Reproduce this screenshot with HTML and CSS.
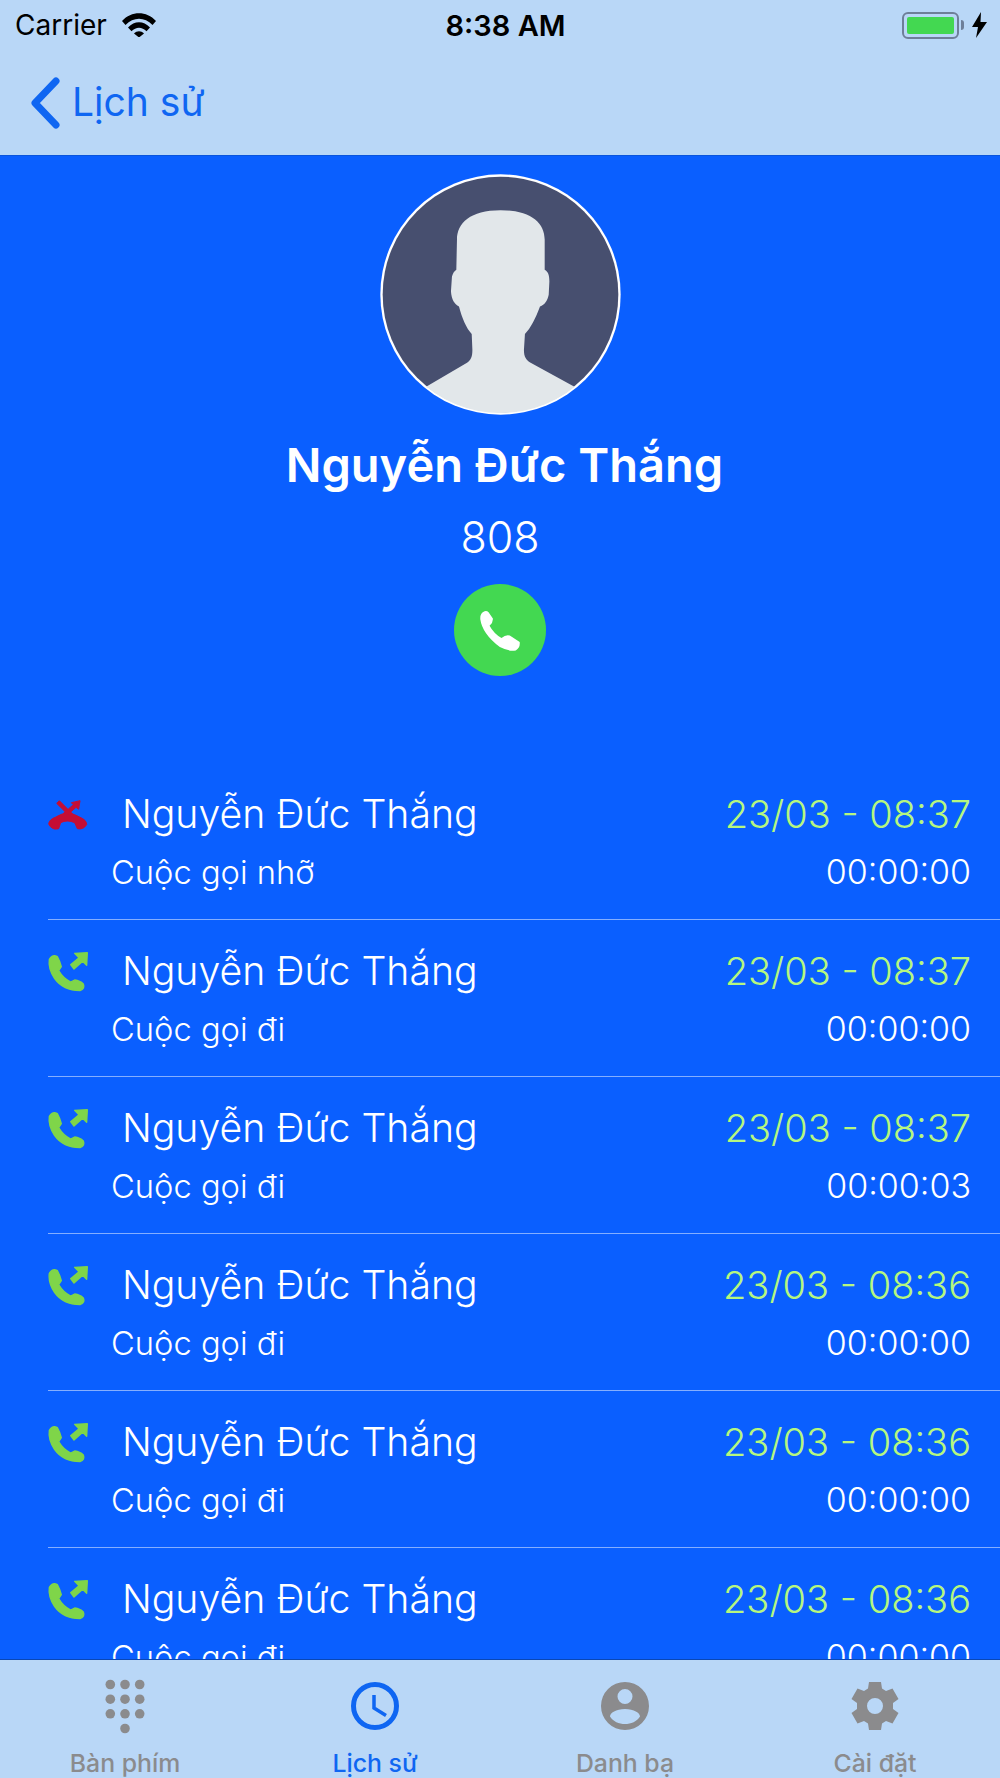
FILE: index.html
```html
<!DOCTYPE html>
<html lang="vi">
<head>
<meta charset="utf-8">
<title>Lịch sử</title>
<link rel="stylesheet" href="styles.css">
</head>
<body>
<svg class="defs" width="0" height="0" aria-hidden="true">
  <defs>
    <filter id="soft" x="-10%" y="-10%" width="120%" height="120%"><feGaussianBlur stdDeviation="1.6"/></filter>
    <filter id="softer" x="-10%" y="-10%" width="120%" height="120%"><feGaussianBlur stdDeviation="2"/></filter>
    <clipPath id="avatar-clip"><circle cx="420" cy="404" r="354"/></clipPath>
    <symbol id="out-icon" viewBox="54 54 120 126">
      <g filter="url(#softer)" fill="#7fd54a" stroke="#7fd54a" stroke-width="4" stroke-linejoin="round">
        <path d="M58 82Q68 66 82 74Q90 88 94 104L86 116Q100 140 122 150L134 144Q150 146 160 156Q166 170 150 176Q100 176 74 140Q54 110 58 82Z"/>
        <path d="M134 64L172 62L170 100L158 88L132 111L122 98L147 77Z"/>
      </g>
    </symbol>
    <symbol id="miss-icon" viewBox="54 63 120 126">
      <g filter="url(#softer)" fill="#c50f35" stroke="#c50f35" stroke-width="3" stroke-linejoin="round">
        <path d="M56 156Q58 142 76 136Q112 112 150 136Q170 144 170 158Q160 174 142 170L134 152Q112 142 92 152L86 170Q66 176 56 156Z"/>
        <path d="M80 94L88 86L134 132L126 140Z"/>
        <path d="M124 92L150 86L146 112L138 106L104 136L96 128L130 98Z"/>
      </g>
    </symbol>
  </defs>
</svg>

<div class="app">
  <header class="topbar">
    <div class="status">
      <div class="status-left">
        <span class="carrier">Carrier</span>
        <svg class="wifi" viewBox="0 0 34 24"><path d="M0 8.500C9.500-1.800 24.500-1.800 34 8.500L30.500 12.500C22.500 4.300 11.500 4.300 3.500 12.500Z"/><path d="M6 15C12.500 8 21.500 8 28 15L24.500 18.800C20 14 14 14 9.500 18.800Z"/><path d="M12 21C15 18 19 18 22 21L17 25Z"/></svg>
      </div>
      <span class="clock">8:38 AM</span>
      <div class="status-right">
        <span class="battery"><span class="battery-fill"></span></span>
        <span class="battery-cap"></span>
        <svg class="bolt" viewBox="0 0 15 26"><path d="M9 0L0 15H6L4 26L15 10H8.500Z"/></svg>
      </div>
    </div>
    <div class="nav">
      <svg class="chevron" viewBox="0 0 32 52"><path d="M26 4L5 26L26 48" fill="none" stroke="currentColor" stroke-width="7" stroke-linecap="round" stroke-linejoin="round"/></svg>
      <span class="nav-title">Lịch sử</span>
    </div>
  </header>

  <main class="content">
    <section class="hero">
      <svg class="avatar" viewBox="60 44 720 720">
        <circle cx="420" cy="404" r="359" fill="#fff"/>
        <circle cx="420" cy="404" r="352" fill="#474f6f"/>
        <g clip-path="url(#avatar-clip)">
          <path filter="url(#soft)" fill="#e2e7ea" d="M290 240C290 190 330 152 420 152C510 152 552 190 552 240L552 330C562 336 566 345 566 365L564 405C560 425 552 434 538 440C525 475 510 505 493 522L490 570C490 590 496 600 510 608L660 690L660 790L180 790L180 690L320 608C332 600 336 590 336 570L334 522C318 505 305 475 296 440C282 432 274 420 272 395L275 350C278 340 282 334 288 330Z"/>
        </g>
      </svg>
      <h1 class="hero-name">Nguyễn Đức Thắng</h1>
      <p class="hero-number">808</p>
      <button class="call-button" type="button" aria-label="Gọi">
        <svg class="call-glyph" viewBox="640 550 160 160"><path fill="#fff" d="M672 572Q658 576 659 596Q665 640 718 680Q745 694 766 690Q780 682 778 665L748 645Q736 641 723 653Q700 640 687 616Q698 606 697 594L684 575Q679 570 672 572Z"/></svg>
      </button>
    </section>

    <section class="calls">
      <article class="call">
        <div class="call-line">
          <svg class="call-icon"><use href="#miss-icon"/></svg>
          <span class="call-name">Nguyễn Đức Thắng</span>
          <span class="call-date">23/03 - 08:37</span>
        </div>
        <div class="call-line call-meta"><span>Cuộc gọi nhỡ</span><span>00:00:00</span></div>
      </article>
      <article class="call">
        <div class="call-line">
          <svg class="call-icon"><use href="#out-icon"/></svg>
          <span class="call-name">Nguyễn Đức Thắng</span>
          <span class="call-date">23/03 - 08:37</span>
        </div>
        <div class="call-line call-meta"><span>Cuộc gọi đi</span><span>00:00:00</span></div>
      </article>
      <article class="call">
        <div class="call-line">
          <svg class="call-icon"><use href="#out-icon"/></svg>
          <span class="call-name">Nguyễn Đức Thắng</span>
          <span class="call-date">23/03 - 08:37</span>
        </div>
        <div class="call-line call-meta"><span>Cuộc gọi đi</span><span>00:00:03</span></div>
      </article>
      <article class="call">
        <div class="call-line">
          <svg class="call-icon"><use href="#out-icon"/></svg>
          <span class="call-name">Nguyễn Đức Thắng</span>
          <span class="call-date">23/03 - 08:36</span>
        </div>
        <div class="call-line call-meta"><span>Cuộc gọi đi</span><span>00:00:00</span></div>
      </article>
      <article class="call">
        <div class="call-line">
          <svg class="call-icon"><use href="#out-icon"/></svg>
          <span class="call-name">Nguyễn Đức Thắng</span>
          <span class="call-date">23/03 - 08:36</span>
        </div>
        <div class="call-line call-meta"><span>Cuộc gọi đi</span><span>00:00:00</span></div>
      </article>
      <article class="call">
        <div class="call-line">
          <svg class="call-icon"><use href="#out-icon"/></svg>
          <span class="call-name">Nguyễn Đức Thắng</span>
          <span class="call-date">23/03 - 08:36</span>
        </div>
        <div class="call-line call-meta"><span>Cuộc gọi đi</span><span>00:00:00</span></div>
      </article>
    </section>
  </main>

  <nav class="tabs">
    <div class="tab">
      <svg class="tab-icon" viewBox="0 0 48 48" fill="currentColor">
        <circle cx="9.300" cy="2.500" r="4.800"/><circle cx="24" cy="2.500" r="4.800"/><circle cx="38.700" cy="2.500" r="4.800"/>
        <circle cx="9.300" cy="17.200" r="4.800"/><circle cx="24" cy="17.200" r="4.800"/><circle cx="38.700" cy="17.200" r="4.800"/>
        <circle cx="9.300" cy="31.800" r="4.800"/><circle cx="24" cy="31.800" r="4.800"/><circle cx="38.700" cy="31.800" r="4.800"/>
        <circle cx="24" cy="46.500" r="4.800"/>
      </svg>
      <span>Bàn phím</span>
    </div>
    <div class="tab tab-active">
      <svg class="tab-icon" viewBox="0 0 48 48" fill="none" stroke="currentColor"><circle cx="24" cy="24" r="21.500" stroke-width="5"/><path d="M23 13V26L35 33.500" stroke-width="3.500"/></svg>
      <span>Lịch sử</span>
    </div>
    <div class="tab">
      <svg class="tab-icon" viewBox="0 0 48 48"><path fill="currentColor" fill-rule="evenodd" d="M24 0A24 24 0 1 1 24 48A24 24 0 1 1 24 0ZM24 7A7.500 7.500 0 1 0 24 22A7.500 7.500 0 1 0 24 7ZM24 27C15 27 9 31 9 34.500C12 39.500 18 42 24 42C30 42 36 39.500 39 34.500C39 31 33 27 24 27Z"/></svg>
      <span>Danh bạ</span>
    </div>
    <div class="tab">
      <svg class="tab-icon" viewBox="0 0 48 48"><path fill="currentColor" fill-rule="evenodd" d="M18 0H30L31 6.500L35 9L41.500 6.500L47.500 17L42 21L42 27L47.500 31L41.500 41.500L35 39L31 41.500L30 48H18L17 41.500L13 39L6.500 41.500L0.500 31L6 27L6 21L0.500 17L6.500 6.500L13 9L17 6.500ZM24 16A8 8 0 1 0 24 32A8 8 0 1 0 24 16Z"/></svg>
      <span>Cài đặt</span>
    </div>
  </nav>
</div>
</body>
</html>
```

FILE: styles.css
```css
* { box-sizing: border-box; }

html, body {
  margin: 0;
  padding: 0;
  height: 100%;
  overflow: hidden;
}

body {
  font-family: Inter, "Noto Sans", "Liberation Sans", sans-serif;
  background: #0a5fff;
  color: #fff;
}

.defs { position: absolute; }

.app {
  height: 1778px;
  display: flex;
  flex-direction: column;
}

.topbar {
  flex: none;
  height: 156px;
  background: #b9d7f7;
  border-bottom: 1px solid #0a55dd;
  color: #000;
}

.status {
  height: 50px;
  padding: 0 13px 0 15px;
  display: grid;
  grid-template-columns: 1fr auto 1fr;
  align-items: center;
  font-size: 28px;
}

.status-left { display: flex; align-items: center; gap: 15px; }

.wifi { width: 34px; height: 25px; fill: #000; margin-top: -2px; }

.clock { margin-left: 9px; font-size: 29px; font-weight: 600; }

.status-right { display: flex; justify-content: flex-end; align-items: center; }

.battery {
  width: 57px;
  height: 27px;
  padding: 3px;
  border: 2px solid #6e7f99;
  border-radius: 6px;
  display: flex;
}

.battery-fill { flex: 1; background: #43d851; border-radius: 2px; }

.battery-cap {
  width: 3px;
  height: 10px;
  margin-left: 2px;
  background: #6e7f99;
  border-radius: 0 3px 3px 0;
}

.bolt { width: 15px; height: 26px; margin-left: 8px; fill: #000; }

.nav {
  height: 105px;
  padding: 0 0 0 30px;
  display: flex;
  align-items: center;
  gap: 10px;
  color: #0f66f2;
}

.chevron { width: 32px; height: 52px; }

.nav-title { font-size: 39px; margin-top: -2px; }

.content {
  flex: 1;
  min-height: 0;
  overflow: hidden;
  background: #0a5fff;
}

.hero {
  display: flex;
  flex-direction: column;
  align-items: center;
  padding-top: 18px;
}

.avatar { width: 241px; height: 241px; display: block; }

.hero-name {
  margin: 22px 0 0 9px;
  font-size: 47px;
  line-height: 56px;
  font-weight: 600;
}

.hero-number {
  margin: 19px 0 0;
  font-size: 43px;
  line-height: 50px;
  font-weight: 300;
}

.call-button {
  width: 92px;
  height: 92px;
  margin: 22px 0 0;
  padding: 0;
  border: 0;
  border-radius: 50%;
  background: #43d851;
  display: flex;
  align-items: center;
  justify-content: center;
}

.call-glyph { width: 53px; height: 53px; }

.calls { margin: 87px 0 0 48px; }

.call {
  height: 157px;
  padding: 26px 29px 0 0;
  border-bottom: 1px solid rgba(255, 255, 255, 0.5);
}

.call-line {
  display: flex;
  align-items: center;
  justify-content: space-between;
}

.call-icon { flex: none; width: 40px; height: 42px; margin-right: 34px; }

.call-name { flex: 1; font-size: 39.2px; line-height: 50px; font-weight: 350; }

.call-date { font-size: 38px; line-height: 50px; color: #b6f77f; font-weight: 350; }

.call-meta {
  margin-top: 13px;
  padding-left: 63px;
  font-size: 32.700px;
  line-height: 40px;
  font-weight: 350;
}

.call-meta span:last-child { font-size: 34px; }

.tabs {
  flex: none;
  height: 119px;
  background: #b9d7f7;
  border-top: 1px solid #0a47b5;
  display: grid;
  grid-template-columns: repeat(4, 1fr);
  color: #8b8b8d;
  font-size: 24.800px;
}

.tab {
  display: flex;
  flex-direction: column;
  align-items: center;
  padding-top: 22px;
  gap: 18px;
  font-weight: 500;
}

.tab-active { color: #0f66f2; }

.tab-icon { width: 48px; height: 48px; overflow: visible; }
```
